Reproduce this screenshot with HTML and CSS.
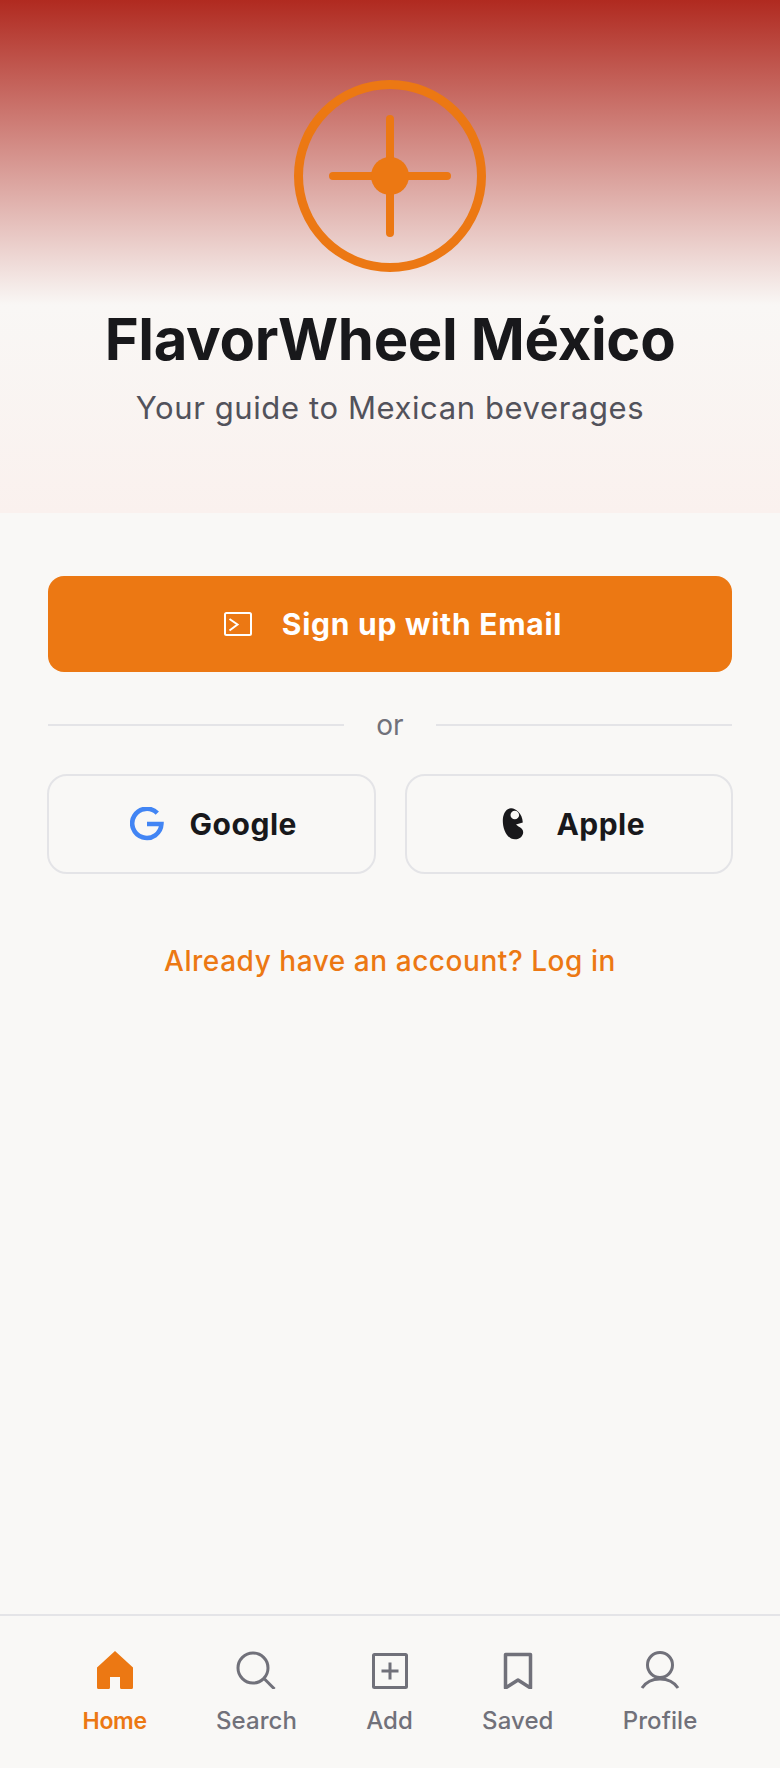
FILE: index.html
```html
<!DOCTYPE html>
<html lang="en">
<head>
    <meta charset="UTF-8">
    <meta name="viewport" content="width=device-width, initial-scale=1.0">
    <title>FlavorWheel México</title>
    <link rel="stylesheet" href="styles.css">
</head>
<body>
    <div class="app">
        <!-- Hero -->
        <header class="hero">
            <svg class="logo" viewBox="0 0 192 192" aria-hidden="true">
                <circle cx="96" cy="96" r="91.500" fill="none" stroke="#ec7813" stroke-width="9"/>
                <path d="M96 39V153M39 96H153" fill="none" stroke="#ec7813" stroke-width="8" stroke-linecap="round"/>
                <circle cx="96" cy="96" r="19" fill="#ec7813"/>
            </svg>
            <h1 class="title">FlavorWheel México</h1>
            <p class="subtitle">Your guide to Mexican beverages</p>
        </header>

        <main class="content">
            <button class="btn-email">
                <svg class="icon-email" viewBox="0 0 28 24" aria-hidden="true">
                    <rect x="1" y="1" width="26" height="22" rx="1.5" fill="none" stroke="#fff" stroke-width="2"/>
                    <path d="M5.5 7L13.5 12.5L5.5 18.5" fill="none" stroke="#fff" stroke-width="2"/>
                </svg>
                <span>Sign up with Email</span>
            </button>

            <div class="divider">
                <span class="divider-line"></span>
                <span class="divider-text">or</span>
                <span class="divider-line"></span>
            </div>

            <div class="social">
                <button class="btn-social">
                    <svg class="icon-social" viewBox="0 0 34 34" aria-hidden="true">
                        <path d="M27.3 6.2A14.6 14.6 0 1 0 31.4 17H17" fill="none" stroke="#4285f4" stroke-width="4.6"/>
                    </svg>
                    <span>Google</span>
                </button>
                <button class="btn-social">
                    <svg class="icon-social" viewBox="0 0 34 34" aria-hidden="true">
                        <path d="M15 1.3C9 1.8 6.800 8 6.800 14C6.800 22 11 32.300 19 32.300C24 32.300 27.200 29 27.200 25C27.200 22.500 25 20.500 22.500 19.500L20 17.500L26.800 15.500C26.500 11 25 7 22 4.500C20 2.500 17.500 1.200 15 1.300Z" fill="#18181b"/>
                        <circle cx="18.800" cy="8" r="4.300" fill="#f9f8f6"/>
                    </svg>
                    <span>Apple</span>
                </button>
            </div>

            <a class="login-link" href="#">Already have an account? Log in</a>
        </main>

        <!-- Bottom navigation -->
        <nav class="tabbar">
            <a class="tab tab-active" href="#">
                <svg class="tab-icon" viewBox="0 0 40 40" aria-hidden="true">
                    <path d="M20 2L38 18.500V38.500A1.500 1.500 0 0 1 36.500 40H26.500A1.500 1.500 0 0 1 25 38.500V28H15V38.500A1.500 1.500 0 0 1 13.500 40H3.500A1.500 1.500 0 0 1 2 38.500V18.500Z" fill="#ec7813"/>
                </svg>
                <span>Home</span>
            </a>
            <a class="tab" href="#">
                <svg class="tab-icon" viewBox="0 0 40 40" aria-hidden="true">
                    <circle cx="17" cy="19" r="15" fill="none" stroke="#71717a" stroke-width="3"/>
                    <path d="M28.500 30L38.500 40" fill="none" stroke="#71717a" stroke-width="3"/>
                </svg>
                <span>Search</span>
            </a>
            <a class="tab" href="#">
                <svg class="tab-icon" viewBox="0 0 40 40" aria-hidden="true">
                    <rect x="3.500" y="5.500" width="33" height="33" rx="1" fill="none" stroke="#71717a" stroke-width="3"/>
                    <path d="M20 13.500V30.500M11.500 22H28.500" fill="none" stroke="#71717a" stroke-width="3"/>
                </svg>
                <span>Add</span>
            </a>
            <a class="tab" href="#">
                <svg class="tab-icon" viewBox="0 0 40 40" aria-hidden="true">
                    <path d="M7.500 5.500H32.500V39L20 31L7.500 39Z" fill="none" stroke="#71717a" stroke-width="3.500" stroke-linejoin="round"/>
                </svg>
                <span>Saved</span>
            </a>
            <a class="tab" href="#">
                <svg class="tab-icon" viewBox="0 0 40 40" aria-hidden="true">
                    <circle cx="20" cy="16" r="12.500" fill="none" stroke="#71717a" stroke-width="3"/>
                    <path d="M2 39C6 33 13 30 20 30C27 30 34 33 38 39" fill="none" stroke="#71717a" stroke-width="3"/>
                </svg>
                <span>Profile</span>
            </a>
        </nav>
    </div>
</body>
</html>
```

FILE: styles.css
```css
* {
    box-sizing: border-box;
    margin: 0;
    padding: 0;
}

body {
    font-family: 'Inter', 'Liberation Sans', sans-serif;
    background-color: #f9f8f6;
    color: #18181b;
}

.app {
    display: flex;
    flex-direction: column;
    height: 100vh;
}

.hero {
    height: 513px;
    padding-top: 80px;
    display: flex;
    flex-direction: column;
    align-items: center;
    background-image: linear-gradient(to bottom, #b02a20 0, #f9f7f5 305px, #faf1ee 513px);
}

.logo {
    width: 192px;
    height: 192px;
    display: block;
}

.title {
    margin-top: 32px;
    font-size: 58px;
    line-height: 70px;
    font-weight: 700;
    letter-spacing: -0.33px;
}

.subtitle {
    margin-top: 12px;
    font-size: 31px;
    line-height: 44px;
    letter-spacing: 0.6px;
    color: #52525b;
}

.content {
    flex: 1;
    padding: 63px 48px 0;
}

button {
    font-family: inherit;
    cursor: pointer;
}

.btn-email {
    width: 100%;
    height: 96px;
    padding-left: 6px;
    display: flex;
    align-items: center;
    justify-content: center;
    gap: 30px;
    background-color: #ec7813;
    color: #fff;
    border: none;
    border-radius: 16px;
    font-size: 30px;
    font-weight: 700;
    letter-spacing: 0.75px;
}

.icon-email {
    width: 28px;
    height: 24px;
}

.divider {
    margin-top: 36px;
    display: flex;
    align-items: center;
    gap: 32px;
}

.divider-line {
    flex: 1;
    height: 2px;
    background-color: #e4e4e7;
}

.divider-text {
    font-size: 28px;
    line-height: 34px;
    color: #71717a;
}

.social {
    margin: 32px -1px 0;
    display: grid;
    grid-template-columns: 1fr 1fr;
    gap: 29px;
}

.btn-social {
    height: 100px;
    padding-left: 4px;
    display: flex;
    align-items: center;
    justify-content: center;
    gap: 26px;
    background: transparent;
    color: #18181b;
    border: 2px solid #e4e4e7;
    border-radius: 20px;
    font-size: 30px;
    font-weight: 700;
    letter-spacing: 0.5px;
}

.icon-social {
    width: 34px;
    height: 34px;
}

.login-link {
    display: block;
    margin-top: 69px;
    text-align: center;
    font-size: 28px;
    font-weight: 500;
    line-height: 36px;
    letter-spacing: 0.55px;
    color: #ec7813;
    text-decoration: none;
}

.tabbar {
    height: 154px;
    padding: 33px 48px 0;
    display: flex;
    justify-content: space-around;
    align-items: flex-start;
    border-top: 2px solid #e4e4e7;
}

.tab {
    display: flex;
    flex-direction: column;
    align-items: center;
    gap: 16px;
    font-size: 24px;
    font-weight: 500;
    line-height: 32px;
    letter-spacing: 0.1px;
    color: #71717a;
    text-decoration: none;
}

.tab-active {
    color: #ec7813;
    font-size: 23px;
    font-weight: 600;
    letter-spacing: -0.3px;
}

.tab-icon {
    width: 40px;
    height: 40px;
}
```
